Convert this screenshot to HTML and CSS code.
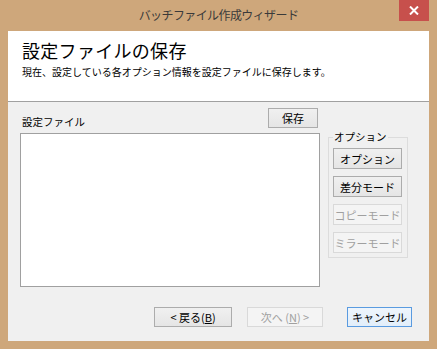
FILE: index.html
```html
<!DOCTYPE html>
<html lang="ja">
  <head>
    <meta charset="UTF-8" />
    <title>バッチファイル作成ウィザード</title>
    <link rel="stylesheet" href="styles.css">
  </head>
  <body>
    <div class="window">
      <div class="titlebar">
        <span></span>
        <div class="title">バッチファイル作成ウィザード</div>
        <div class="caption-buttons">
          <button class="close">
            <svg width="10" height="9" viewBox="0 0 10 9">
              <path d="M1 0.5 L9 8.5 M9 0.5 L1 8.5" stroke="#fff" stroke-width="2" fill="none" />
            </svg>
          </button>
        </div>
      </div>

      <div class="client">
        <div class="header">
          <h1>設定ファイルの保存</h1>
          <p>現在、設定している各オプション情報を設定ファイルに保存します。</p>
        </div>

        <div class="content">
          <div class="file-pane">
            <div class="file-bar">
              <label>設定ファイル</label>
              <button class="btn save-btn">保存</button>
            </div>
            <div class="file-box"></div>
          </div>

          <fieldset class="options">
            <legend>オプション</legend>
            <button class="btn opt-btn">オプション</button>
            <button class="btn opt-btn">差分モード</button>
            <button class="btn opt-btn" disabled>コピーモード</button>
            <button class="btn opt-btn" disabled>ミラーモード</button>
          </fieldset>
        </div>

        <div class="footer">
          <button class="btn back-btn">&lt;&nbsp;戻る(<u>B</u>)</button>
          <button class="btn next-btn" disabled>次へ (<u>N</u>) &gt;</button>
          <button class="btn cancel-btn">キャンセル</button>
        </div>
      </div>
    </div>
  </body>
</html>
```

FILE: styles.css
```css
* {
  box-sizing: border-box;
}

body {
  margin: 0;
  font-family: "Noto Sans CJK JP", sans-serif;
}

.window {
  width: 437px;
  height: 349px;
  display: flex;
  flex-direction: column;
  background: #cea77b;
}

.titlebar {
  height: 31px;
  flex-shrink: 0;
  display: grid;
  grid-template-columns: 1fr auto 1fr;
  padding: 0 8px;
}

.title {
  margin-top: 9px;
  font-size: 12px;
  line-height: 12px;
  letter-spacing: -0.6px;
  color: #3a3a3a;
}

.caption-buttons {
  justify-self: end;
}

.close {
  width: 30px;
  height: 21px;
  padding: 0;
  border: none;
  background: #c7504c;
  display: flex;
  justify-content: center;
  align-items: center;
}

.client {
  flex: 1;
  margin: 0 8px 8px;
  background: #f0f0f0;
  display: flex;
  flex-direction: column;
}

.header {
  height: 71px;
  padding: 10px 14px 0;
  background: #fff;
  border-bottom: 1px solid #a0a0a0;
}

.header h1 {
  margin: 0;
  font-size: 18px;
  line-height: 18px;
  font-weight: normal;
  letter-spacing: 0.3px;
  color: #000;
}

.header p {
  margin: 8px 0 0;
  font-size: 10px;
  line-height: 10px;
  letter-spacing: 0;
  color: #000;
}

.content {
  display: flex;
  gap: 8px;
  padding: 6px 0 0 12px;
}

.file-pane {
  width: 300px;
}

.file-bar {
  height: 25px;
  display: flex;
  justify-content: space-between;
}

.file-bar label {
  align-self: flex-end;
  margin: 0 0 5px 2px;
  font-size: 10.5px;
  line-height: 12px;
}

.file-box {
  height: 154px;
  border: 1px solid #a0a0a0;
  background: #fff;
}

.btn {
  padding: 0;
  border: 1px solid #acacac;
  background: linear-gradient(#f0f0f0, #e5e5e5);
  font-family: inherit;
  font-size: 11px;
  color: #000;
}

.btn:disabled {
  border-color: #d9d9d9;
  background: #f4f4f4;
  color: #a0a0a0;
}

.save-btn {
  width: 50px;
  height: 20px;
  margin-right: 2px;
}

.options {
  width: 80px;
  margin: 25px 0 0;
  padding: 7px 4px 4px;
  border: 1px solid #dcdcdc;
  display: flex;
  flex-direction: column;
  gap: 7px;
  align-self: flex-start;
}

.options legend {
  padding: 0 1px;
  font-size: 10.5px;
  line-height: 8px;
}

.opt-btn {
  width: 69px;
  height: 21px;
}

.footer {
  display: flex;
  justify-content: flex-end;
  padding: 20px 17px 0 0;
}

.footer .btn {
  height: 20px;
}

.back-btn {
  width: 78px;
}

.next-btn {
  width: 76px;
  margin-left: 15px;
}

.cancel-btn {
  width: 65px;
  margin-left: 24px;
  border-color: #5a9be0;
  background: linear-gradient(#eef5fc, #e2eefa);
}
```
